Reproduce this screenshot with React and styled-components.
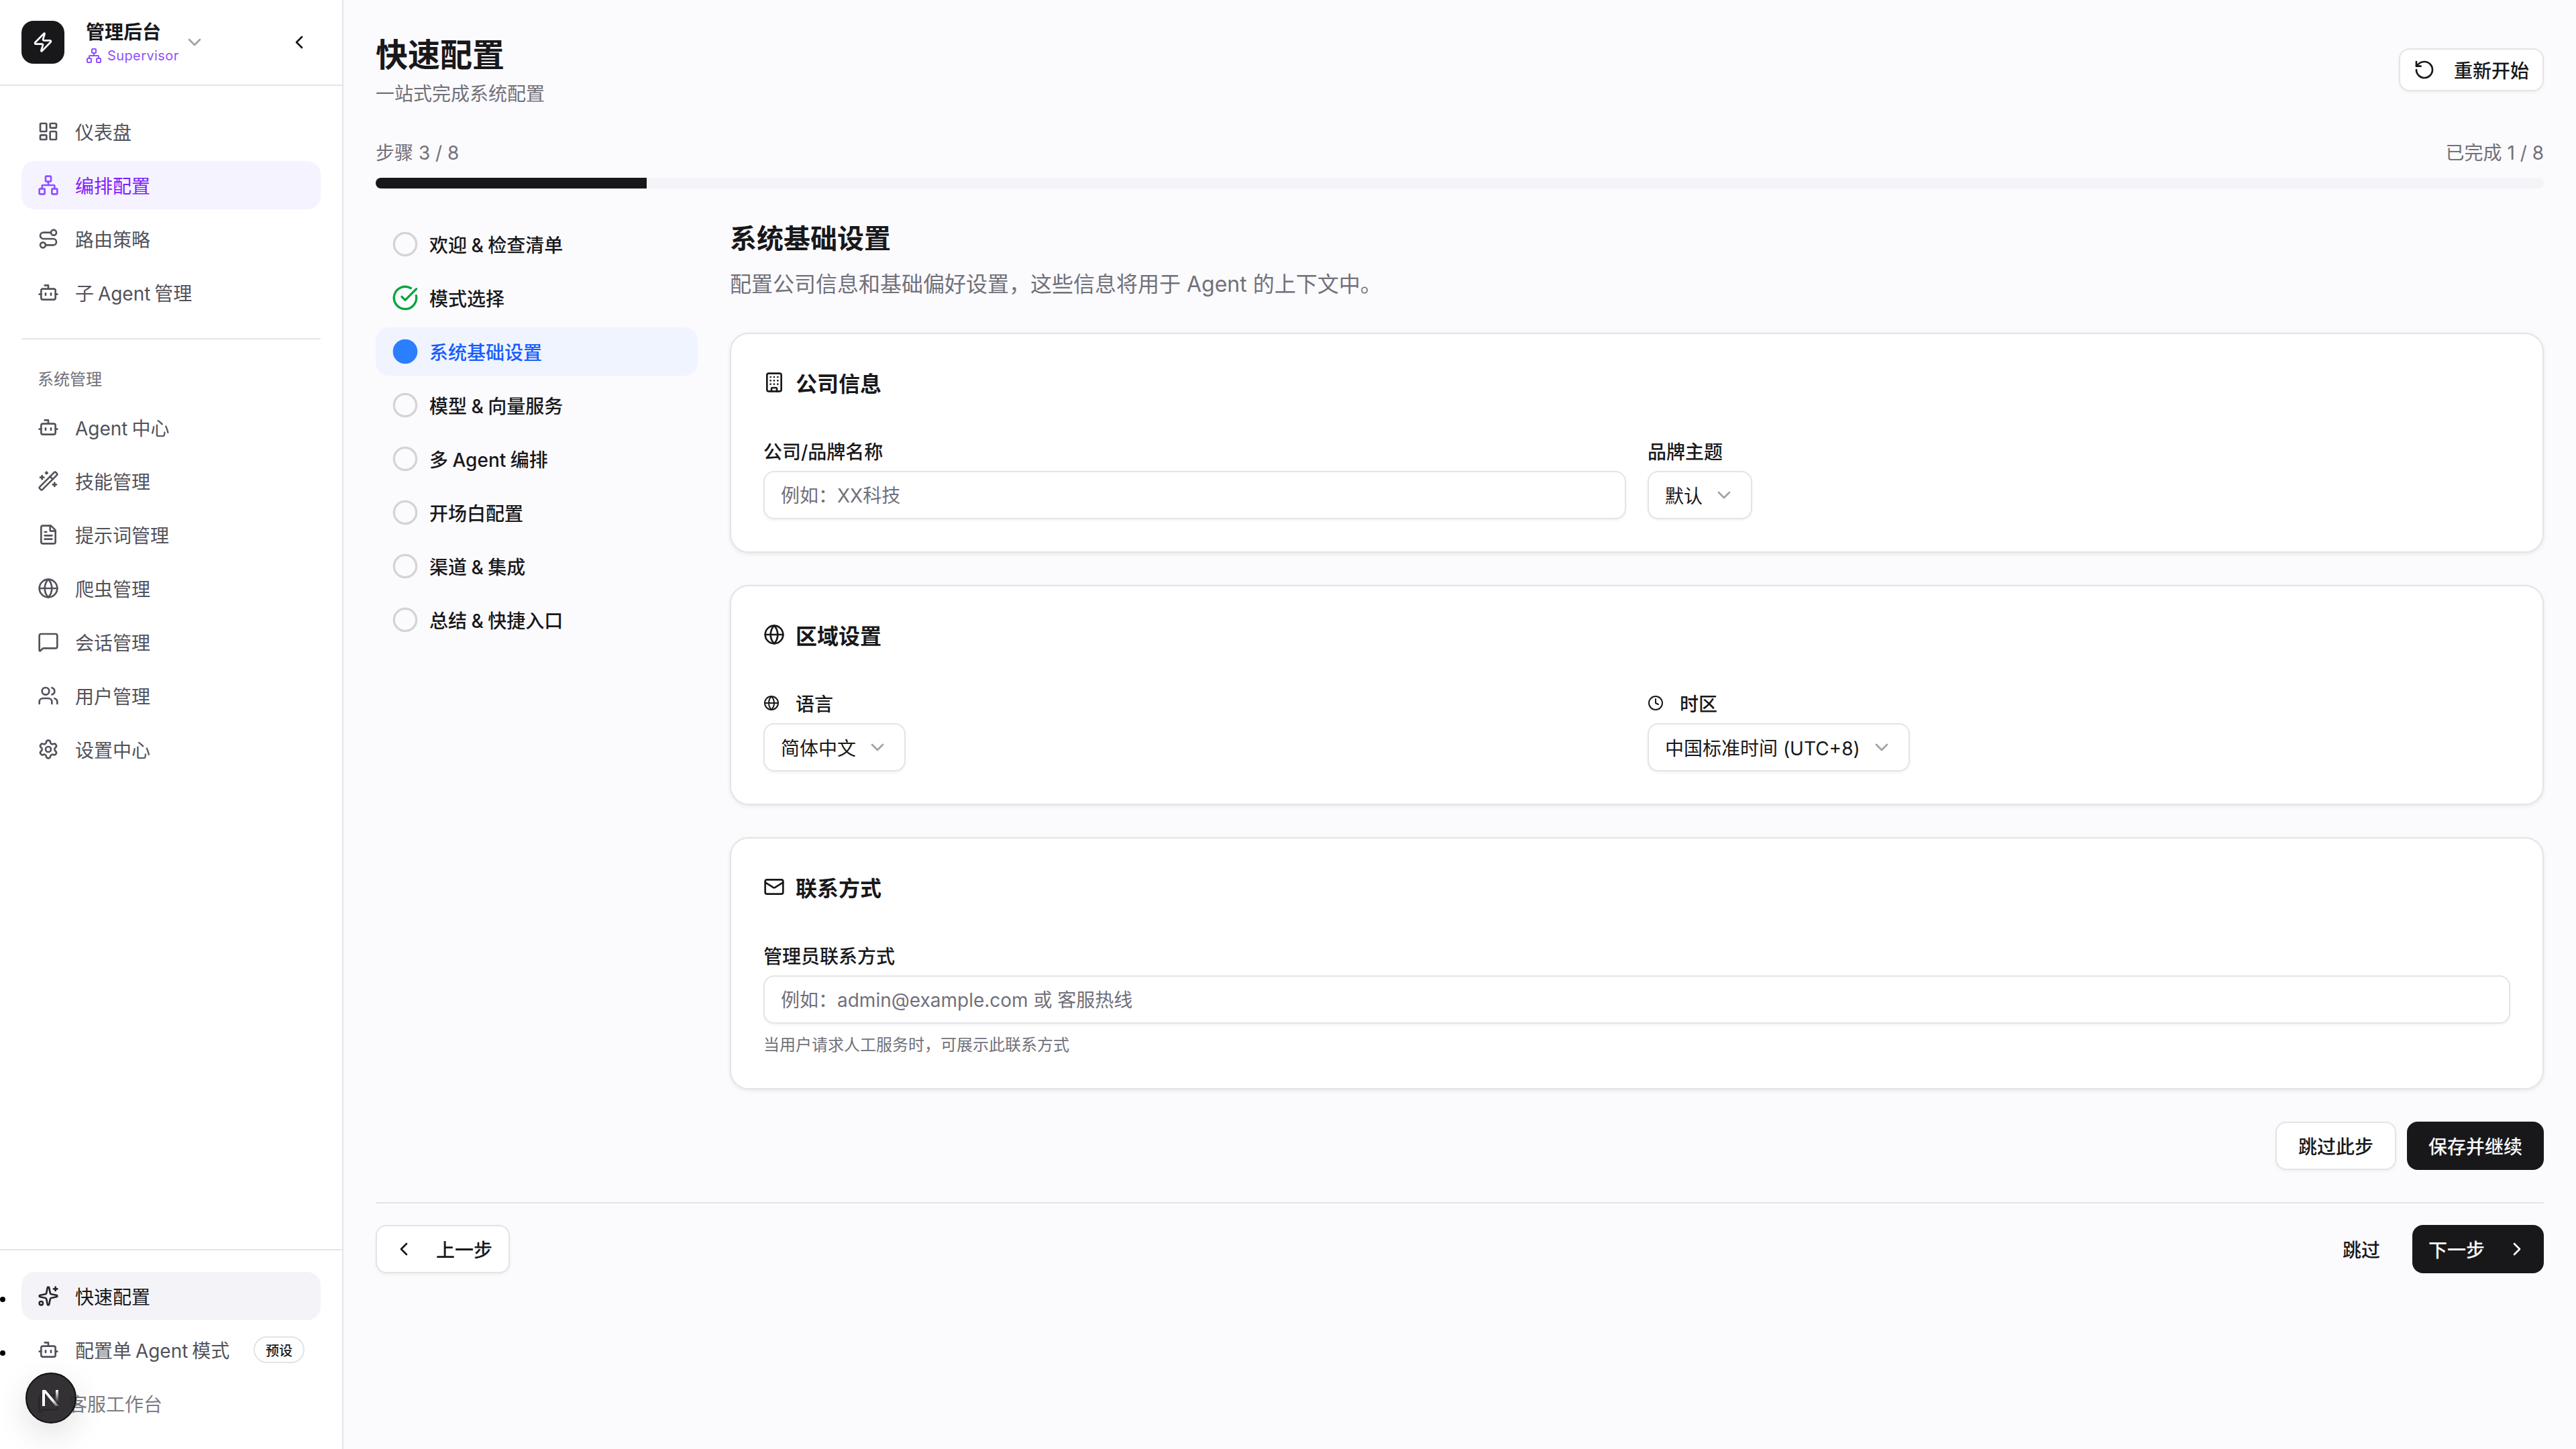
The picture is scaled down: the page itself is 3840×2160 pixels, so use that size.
import React from 'react';
import styled, { createGlobalStyle } from 'styled-components';
import {
	Bot,
	Building,
	ChevronDown,
	ChevronLeft,
	ChevronRight,
	Circle,
	CircleCheckBig,
	Clock,
	FileText,
	Globe,
	LayoutDashboard,
	Mail,
	MessageSquare,
	Network,
	RotateCcw,
	Route,
	Settings,
	Sparkles,
	Users,
	WandSparkles,
	Zap,
} from 'lucide-react';

const mainNav = [
	{ label: '仪表盘', icon: LayoutDashboard },
	{ label: '编排配置', icon: Network, active: true },
	{ label: '路由策略', icon: Route },
	{ label: '子 Agent 管理', icon: Bot },
];

const systemNav = [
	{ label: 'Agent 中心', icon: Bot },
	{ label: '技能管理', icon: WandSparkles },
	{ label: '提示词管理', icon: FileText },
	{ label: '爬虫管理', icon: Globe },
	{ label: '会话管理', icon: MessageSquare },
	{ label: '用户管理', icon: Users },
	{ label: '设置中心', icon: Settings },
];

const steps = [
	{ label: '欢迎 & 检查清单' },
	{ label: '模式选择', state: 'done' },
	{ label: '系统基础设置', state: 'current' },
	{ label: '模型 & 向量服务' },
	{ label: '多 Agent 编排' },
	{ label: '开场白配置' },
	{ label: '渠道 & 集成' },
	{ label: '总结 & 快捷入口' },
];

function StepIcon({ state }) {
	if (state === 'done') return <CircleCheckBig size={40} color='#00a63e' />;
	if (state === 'current') return <Circle size={40} color='#2b7fff' fill='#2b7fff' />;
	return <Circle size={40} color='#d4d4d8' />;
}

export default function App() {
	return (
		<>
			<GlobalStyle />
			<Page>
				<Sidebar>
					<BrandBar>
						<Logo>
							<Zap size={32} color='#fff' />
						</Logo>
						<BrandText>
							<BrandTitle>管理后台</BrandTitle>
							<BrandRole>
								<Network size={24} />
								Supervisor
							</BrandRole>
						</BrandText>
						<ChevronDown size={32} color='#a1a1aa' />
						<CollapseBtn>
							<ChevronLeft size={32} color='#18181b' />
						</CollapseBtn>
					</BrandBar>

					<NavArea>
						<NavGroup>
							{mainNav.map((item) => (
								<NavItem key={item.label} $active={item.active}>
									<item.icon size={32} />
									{item.label}
								</NavItem>
							))}
						</NavGroup>
						<NavDivider />
						<SectionLabel>系统管理</SectionLabel>
						<NavGroup>
							{systemNav.map((item) => (
								<NavItem key={item.label}>
									<item.icon size={32} />
									{item.label}
								</NavItem>
							))}
						</NavGroup>
					</NavArea>

					<SidebarFooter>
						<NavItem $current $dot>
							<Sparkles size={32} />
							快速配置
						</NavItem>
						<NavItem $dot>
							<Bot size={32} />
							配置单 Agent 模式
							<Badge>预设</Badge>
						</NavItem>
						<NavItem $muted>
							<MessageSquare size={32} />
							客服工作台
						</NavItem>
					</SidebarFooter>
				</Sidebar>

				<Main>
					<PageHeader>
						<div>
							<PageTitle>快速配置</PageTitle>
							<PageSub>一站式完成系统配置</PageSub>
						</div>
						<RestartBtn>
							<RotateCcw size={32} />
							重新开始
						</RestartBtn>
					</PageHeader>

					<ProgressRow>
						<span>步骤 3 / 8</span>
						<span>已完成 1 / 8</span>
					</ProgressRow>
					<ProgressTrack>
						<ProgressFill $value={12.5} />
					</ProgressTrack>

					<Wizard>
						<StepList>
							{steps.map((step) => (
								<StepItem key={step.label} $current={step.state === 'current'}>
									<StepIcon state={step.state} />
									{step.label}
								</StepItem>
							))}
						</StepList>

						<StepBody>
							<StepTitle>系统基础设置</StepTitle>
							<StepDesc>
								配置公司信息和基础偏好设置，这些信息将用于 Agent 的上下文中。
							</StepDesc>

							<Cards>
								<Card>
									<CardHeader>
										<Building size={32} />
										公司信息
									</CardHeader>
									<TwoCols>
										<div>
											<Label>公司/品牌名称</Label>
											<TextInput placeholder='例如：XX科技' />
										</div>
										<div>
											<Label>品牌主题</Label>
											<SelectBtn>
												默认
												<ChevronDown size={32} />
											</SelectBtn>
										</div>
									</TwoCols>
								</Card>

								<Card>
									<CardHeader>
										<Globe size={32} />
										区域设置
									</CardHeader>
									<TwoCols>
										<div>
											<Label>
												<Globe size={24} />
												语言
											</Label>
											<SelectBtn>
												简体中文
												<ChevronDown size={32} />
											</SelectBtn>
										</div>
										<div>
											<Label>
												<Clock size={24} />
												时区
											</Label>
											<SelectBtn>
												中国标准时间 (UTC+8)
												<ChevronDown size={32} />
											</SelectBtn>
										</div>
									</TwoCols>
								</Card>

								<Card>
									<CardHeader>
										<Mail size={32} />
										联系方式
									</CardHeader>
									<Label>管理员联系方式</Label>
									<TextInput placeholder='例如：admin@example.com 或 客服热线' />
									<Hint>当用户请求人工服务时，可展示此联系方式</Hint>
								</Card>
							</Cards>

							<StepActions>
								<OutlineBtn>跳过此步</OutlineBtn>
								<DarkBtn>保存并继续</DarkBtn>
							</StepActions>
						</StepBody>
					</Wizard>

					<FooterBar>
						<OutlineBtn $icon>
							<ChevronLeft size={32} />
							上一步
						</OutlineBtn>
						<FooterRight>
							<GhostBtn>跳过</GhostBtn>
							<DarkBtn $icon>
								下一步
								<ChevronRight size={32} />
							</DarkBtn>
						</FooterRight>
					</FooterBar>
				</Main>

				<DevBadge>
					<svg width='28' height='28' viewBox='0 0 28 28' fill='none'>
						<defs>
							<linearGradient id='nFade' x1='0' y1='0' x2='1' y2='1'>
								<stop offset='0.6' stopColor='#fff' />
								<stop offset='1' stopColor='#fff' stopOpacity='0.2' />
							</linearGradient>
							<linearGradient id='nBar' x1='0' y1='0' x2='0' y2='1'>
								<stop offset='0' stopColor='#fff' />
								<stop offset='0.85' stopColor='#fff' stopOpacity='0' />
							</linearGradient>
						</defs>
						<path d='M1 2h4v24H1z' fill='#fff' />
						<path d='M1 2h5l20 24h-5z' fill='url(#nFade)' />
						<path d='M21 2h4v22h-4z' fill='url(#nBar)' />
					</svg>
				</DevBadge>
			</Page>
		</>
	);
}

const GlobalStyle = createGlobalStyle`
	* {
		box-sizing: border-box;
	}

	body {
		margin: 0;
		background: #fbfafd;
		color: #18181b;
		font-family: Inter, 'Noto Sans CJK SC', sans-serif;
		font-size: 28px;
	}
`;

const Page = styled.div`
	display: flex;
	min-height: 2160px;
	background: #fbfafd;
`;

const Sidebar = styled.aside`
	display: flex;
	flex-direction: column;
	flex: none;
	width: 512px;
	background: #fff;
	border-right: 2px solid #e4e4e7;
`;

const BrandBar = styled.div`
	display: flex;
	align-items: center;
	height: 128px;
	padding: 0 48px 0 32px;
	border-bottom: 2px solid #e4e4e7;
`;

const Logo = styled.div`
	display: flex;
	align-items: center;
	justify-content: center;
	width: 64px;
	height: 64px;
	margin-right: 32px;
	border-radius: 18px;
	background: #18181b;
`;

const BrandText = styled.div`
	display: flex;
	flex-direction: column;
	gap: 2px;
	width: 146px;
`;

const BrandTitle = styled.div`
	font-size: 28px;
	font-weight: 600;
	line-height: 38px;
`;

const BrandRole = styled.div`
	display: flex;
	align-items: center;
	gap: 8px;
	font-size: 20px;
	line-height: 28px;
	letter-spacing: 0.4px;
	color: #8e51ff;
	white-space: nowrap;
`;

const CollapseBtn = styled.div`
	display: flex;
	margin-left: auto;
`;

const NavArea = styled.nav`
	flex: 1;
	padding: 32px 32px 0;
`;

const NavGroup = styled.div`
	display: flex;
	flex-direction: column;
	gap: 8px;
`;

const NavItem = styled.div`
	position: relative;
	display: flex;
	align-items: center;
	gap: ${(p) => (p.$muted ? '14px' : '24px')};
	height: 72px;
	padding: 0 24px;
	border-radius: 20px;
	font-size: 28px;
	word-spacing: -2px;
	white-space: nowrap;
	color: ${(p) => (p.$active ? '#7f22fe' : p.$current ? '#18181b' : p.$muted ? '#7c7c86' : '#52525b')};
	background: ${(p) => (p.$active ? '#f5f3ff' : p.$current ? '#f4f3f8' : 'transparent')};

	svg {
		flex: none;
		color: ${(p) => (p.$active ? '#8e51ff' : p.$current ? '#27272a' : '#52525b')};
	}

	${(p) =>
		p.$dot &&
		`
		&::before {
			content: '';
			position: absolute;
			left: -32px;
			top: 37px;
			width: 8px;
			height: 8px;
			border-radius: 50%;
			background: #000;
		}
	`}
`;

const NavDivider = styled.div`
	height: 2px;
	margin: 32px 0 40px;
	background: #e4e4e7;
`;

const SectionLabel = styled.div`
	height: 40px;
	margin-bottom: 15px;
	padding-left: 24px;
	font-size: 24px;
	line-height: 40px;
	color: #71717a;
`;

const SidebarFooter = styled.div`
	display: flex;
	flex-direction: column;
	gap: 8px;
	padding: 32px;
	border-top: 2px solid #e4e4e7;
`;

const Badge = styled.span`
	display: flex;
	align-items: center;
	margin-left: auto;
	height: 40px;
	padding: 0 16px;
	border: 2px solid #e4e4e7;
	border-radius: 20px;
	font-size: 20px;
	font-weight: 500;
	color: #18181b;
`;

const Main = styled.main`
	flex: 1;
	min-width: 0;
	padding: 48px 48px 0;
`;

const PageHeader = styled.header`
	display: flex;
	align-items: flex-start;
	justify-content: space-between;
	margin-bottom: 48px;
`;

const PageTitle = styled.h1`
	margin: 0 0 4px;
	font-size: 48px;
	font-weight: 600;
	line-height: 68px;
`;

const PageSub = styled.p`
	margin: 0;
	font-size: 28px;
	line-height: 40px;
	color: #71717a;
`;

const RestartBtn = styled.button`
	display: flex;
	align-items: center;
	gap: 28px;
	height: 64px;
	margin-top: 24px;
	padding: 0 20px;
	border: 2px solid #e4e4e7;
	border-radius: 16px;
	background: #fff;
	box-shadow: 0 2px 4px rgba(0, 0, 0, 0.05);
	color: #18181b;
	font: inherit;
	font-weight: 500;
`;

const ProgressRow = styled.div`
	display: flex;
	justify-content: space-between;
	margin-bottom: 16px;
	font-size: 28px;
	line-height: 41px;
	color: #71717a;
`;

const ProgressTrack = styled.div`
	height: 16px;
	margin-bottom: 45px;
	border-radius: 8px;
	background: #f4f3f7;
	overflow: hidden;
`;

const ProgressFill = styled.div`
	width: ${(p) => p.$value}%;
	height: 100%;
	background: #18181b;
`;

const Wizard = styled.div`
	display: grid;
	grid-template-columns: 480px 1fr;
	gap: 48px;
`;

const StepList = styled.div`
	display: flex;
	flex-direction: column;
	gap: 8px;
	padding-top: 2px;
`;

const StepItem = styled.div`
	display: flex;
	align-items: center;
	gap: 16px;
	height: 72px;
	padding: 0 24px;
	border-radius: 20px;
	font-size: 28px;
	font-weight: 500;
	word-spacing: -1px;
	color: ${(p) => (p.$current ? '#155dfc' : '#18181b')};
	background: ${(p) => (p.$current ? '#f0f4ff' : 'transparent')};

	svg {
		flex: none;
	}
`;

const StepBody = styled.section`
	min-width: 0;
`;

const StepTitle = styled.h2`
	margin: 2px 0 18px;
	font-size: 40px;
	font-weight: 600;
	line-height: 56px;
`;

const StepDesc = styled.p`
	margin: 0 0 50px;
	font-size: 32px;
	line-height: 44px;
	color: #71717a;
`;

const Cards = styled.div`
	display: flex;
	flex-direction: column;
	gap: 48px;
`;

const Card = styled.div`
	padding: 48px;
	border: 2px solid #e4e4e7;
	border-radius: 28px;
	background: #fff;
	box-shadow: 0 2px 6px rgba(0, 0, 0, 0.08);
`;

const CardHeader = styled.div`
	display: flex;
	align-items: center;
	gap: 16px;
	height: 48px;
	margin-bottom: 58px;
	font-size: 32px;
	font-weight: 600;
`;

const TwoCols = styled.div`
	display: grid;
	grid-template-columns: 1fr 1fr;
	gap: 32px;
`;

const Label = styled.label`
	display: flex;
	align-items: center;
	gap: 24px;
	height: 40px;
	margin-bottom: 10px;
	font-size: 28px;
	font-weight: 500;
`;

const TextInput = styled.input`
	display: block;
	width: 100%;
	height: 72px;
	padding: 2px 24px 0;
	border: 2px solid #e4e4e7;
	border-radius: 16px;
	background: #fff;
	box-shadow: 0 2px 4px rgba(0, 0, 0, 0.05);
	color: #18181b;
	font: inherit;
	font-size: 28px;

	&::placeholder {
		color: #71717a;
		opacity: 1;
	}
`;

const SelectBtn = styled.button`
	display: inline-flex;
	align-items: center;
	gap: 16px;
	height: 72px;
	padding: 0 24px;
	border: 2px solid #e4e4e7;
	border-radius: 16px;
	background: #fff;
	box-shadow: 0 2px 4px rgba(0, 0, 0, 0.05);
	color: #18181b;
	font: inherit;
	font-size: 28px;

	svg {
		color: #a1a1aa;
	}
`;

const Hint = styled.p`
	margin: 16px 0 0;
	font-size: 24px;
	line-height: 32px;
	color: #71717a;
`;

const StepActions = styled.div`
	display: flex;
	justify-content: flex-end;
	gap: 16px;
	margin-top: 48px;
`;

const OutlineBtn = styled.button`
	display: flex;
	align-items: center;
	gap: 32px;
	height: 72px;
	padding: 0 ${(p) => (p.$icon ? '24px' : '32px')};
	border: 2px solid #e4e4e7;
	border-radius: 16px;
	background: #fff;
	box-shadow: 0 2px 4px rgba(0, 0, 0, 0.05);
	color: #18181b;
	font: inherit;
	font-weight: 500;
`;

const DarkBtn = styled.button`
	display: flex;
	align-items: center;
	gap: 32px;
	height: 72px;
	padding: 0 ${(p) => (p.$icon ? '24px' : '32px')};
	border: none;
	border-radius: 16px;
	background: #18181b;
	color: #fafafa;
	font: inherit;
	font-weight: 500;
`;

const GhostBtn = styled.button`
	height: 72px;
	padding: 0 32px;
	border: none;
	background: transparent;
	color: #18181b;
	font: inherit;
	font-weight: 500;
`;

const FooterBar = styled.div`
	display: flex;
	justify-content: space-between;
	margin-top: 48px;
	padding-top: 32px;
	border-top: 2px solid #e4e4e7;
`;

const FooterRight = styled.div`
	display: flex;
	gap: 16px;
`;

const DevBadge = styled.div`
	position: fixed;
	left: 38px;
	bottom: 38px;
	display: flex;
	align-items: center;
	justify-content: center;
	width: 76px;
	height: 76px;
	border: 2px solid #111;
	border-radius: 50%;
	background: rgba(38, 36, 38, 0.94);
	box-shadow: 0 16px 48px rgba(0, 0, 0, 0.12);
`;
